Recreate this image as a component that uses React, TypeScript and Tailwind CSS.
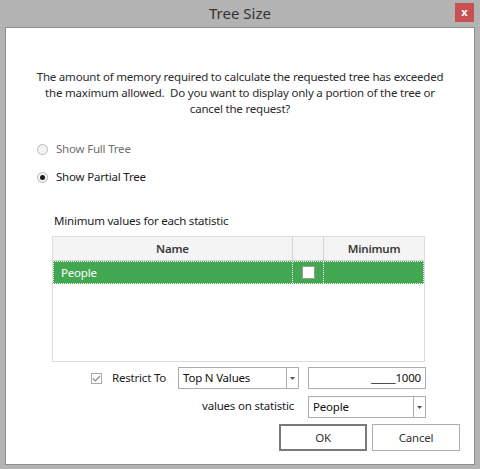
import React from "react";

function Radio({ checked }: { checked?: boolean }) {
    return (
        <span className="w-[11px] h-[11px] rounded-full border border-[#b9b9b9] bg-[#f4f4f4] flex items-center justify-center">
            {checked && <span className="w-[5px] h-[5px] rounded-full bg-[#1c1c1c]" />}
        </span>
    );
}

function Combo({ value, width }: { value: string; width: string }) {
    return (
        <div className={`${width} h-[22px] border border-[#acacac] bg-white flex`}>
            <span className="flex-1 pl-[4px] leading-[20px] text-[#111]">{value}</span>
            <span className="w-[12px] border-l border-[#acacac] flex items-center justify-center">
                <svg width="5" height="3" viewBox="0 0 5 3">
                    <path d="M0 0h5L2.5 3z" fill="#555" />
                </svg>
            </span>
        </div>
    );
}

export default function App() {
    return (
        <div
            className="w-[480px] h-[469px] bg-[#b3b3b3] flex flex-col px-[5px] pb-[4px] text-[11.5px] tracking-[-0.2px] text-[#2b2b2b]"
            style={{ fontFamily: '"Noto Sans", "Open Sans", sans-serif' }}
        >
            <div className="h-[27px] grid grid-cols-[1fr_auto_1fr] items-start">
                <span />
                <span className="mt-[3px] text-[15px] tracking-normal leading-[20px] text-[#333]">Tree Size</span>
                <span className="justify-self-end mt-[3px] mr-[1px] w-[19px] h-[19px] bg-[#c75050] text-white text-[11px] tracking-normal font-bold leading-[17px] text-center">
                    x
                </span>
            </div>
            <div className="flex-1 bg-white border border-[#8e8e8e] flex flex-col">
                <p className="mt-[41px] text-center leading-[16px]">
                    The amount of memory required to calculate the requested tree has exceeded
                    <br />
                    the maximum allowed.&nbsp; Do you want to display only a portion of the tree or
                    <br />
                    cancel the request?
                </p>

                <div className="mt-[24px] ml-[31px] h-[16px] flex items-center gap-[8px] text-[#6f6f6f]">
                    <Radio />
                    <span>Show Full Tree</span>
                </div>
                <div className="mt-[12px] ml-[31px] h-[16px] flex items-center gap-[8px] text-[#1c1c1c]">
                    <Radio checked />
                    <span>Show Partial Tree</span>
                </div>

                <div className="mt-[28px] ml-[48px] h-[16px] leading-[16px] text-[#1c1c1c]">
                    Minimum values for each statistic
                </div>

                <div className="mt-[7px] ml-[46px] w-[373px] h-[126px] border border-[#dcdcdc] flex flex-col">
                    <div className="h-[24px] bg-[#f4f4f4] border-b border-[#d2d2d2] flex font-semibold text-[#3a3a3a]">
                        <span className="w-[240px] border-r border-[#d2d2d2] text-center leading-[23px]">Name</span>
                        <span className="w-[31px] border-r border-[#d2d2d2]" />
                        <span className="flex-1 text-center leading-[23px]">Minimum</span>
                    </div>
                    <div className="h-[23px] bg-[#43a651] border border-dotted border-white flex text-white">
                        <span className="w-[239px] border-r border-dotted border-white pl-[7px] leading-[21px]">People</span>
                        <span className="w-[31px] border-r border-dotted border-white flex items-center justify-center">
                            <span className="w-[13px] h-[13px] bg-white border border-[#9a9a9a]" />
                        </span>
                        <span className="flex-1" />
                    </div>
                </div>

                <div className="mt-[5px] flex items-center h-[22px]">
                    <div className="ml-[85px] w-[87px] flex items-center gap-[10px]">
                        <span className="w-[11px] h-[11px] border border-[#a8a8a8] flex items-center justify-center">
                            <svg width="9" height="7" viewBox="0 0 9 7">
                                <path d="M1 3.5l2.3 2.3L8 1" stroke="#8a8a8a" strokeWidth="1.2" fill="none" />
                            </svg>
                        </span>
                        <span className="text-[#1c1c1c]">Restrict To</span>
                    </div>
                    <Combo value="Top N Values" width="w-[121px]" />
                    <div className="ml-[9px] w-[118px] h-[22px] border border-[#acacac] text-right pr-[4px] leading-[20px] text-[#111]">
                        _____1000
                    </div>
                </div>

                <div className="mt-[7px] flex items-center h-[22px]">
                    <span className="w-[288px] text-right text-[#1c1c1c] -mt-[2px]">values on statistic</span>
                    <div className="ml-[14px]">
                        <Combo value="People" width="w-[118px]" />
                    </div>
                </div>

                <div className="mt-[6px] ml-[273px] flex gap-[5px]">
                    <button className="w-[88px] h-[27px] bg-white border-2 border-[#7a7a7a] text-[#333]">OK</button>
                    <button className="w-[88px] h-[27px] bg-white border border-[#adadad] text-[#333]">Cancel</button>
                </div>
            </div>
        </div>
    );
}
